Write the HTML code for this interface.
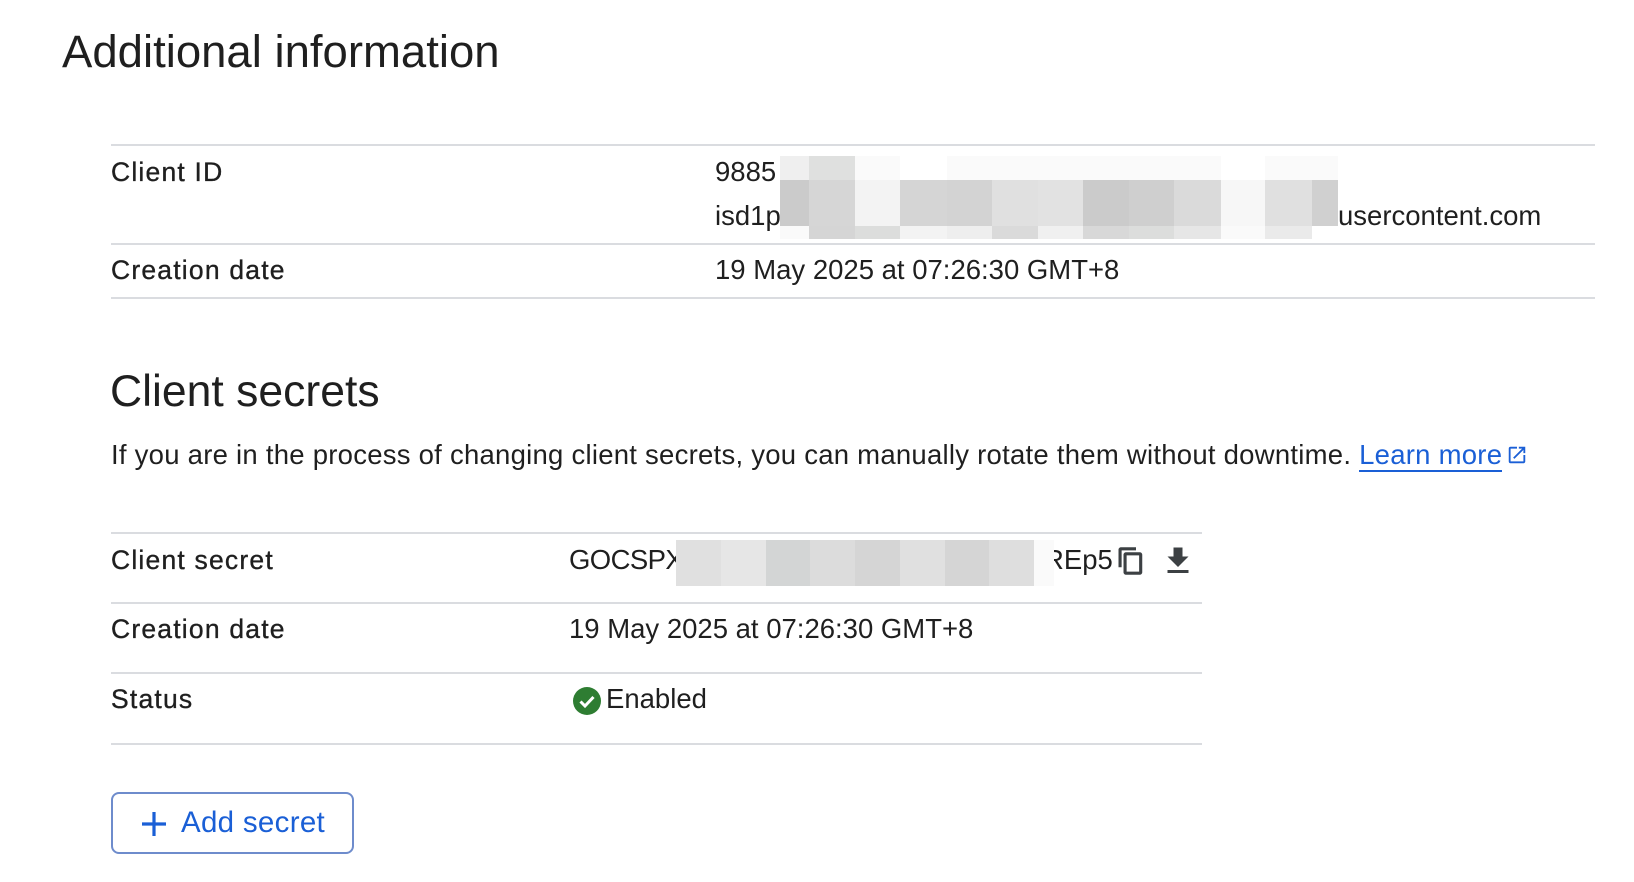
<!DOCTYPE html>
<html><head><meta charset="utf-8"><style>
*{margin:0;padding:0;box-sizing:border-box}
body{width:1634px;height:882px;background:#fff;font-family:"Liberation Sans",sans-serif;color:#1f1f1f;position:relative;overflow:hidden}
.a{position:absolute;white-space:nowrap}
.h{font-size:44px;color:#1f1f1f}
.t{font-size:27.5px;line-height:30px}
.l{font-size:26.5px;line-height:30px;color:#1f1f1f;letter-spacing:1.2px;-webkit-text-stroke:0.35px #1f1f1f}
.line{position:absolute;height:2px;background:#dadce0}
.b{position:absolute}
</style></head><body>
<div class="a h" style="left:62px;top:26px;font-size:45.5px">Additional information</div>

<div class="line" style="left:111px;top:144px;width:1484px"></div>
<div class="a l" style="left:111px;top:157px">Client ID</div>
<div class="a t" style="left:715px;top:157px">9885</div>
<div class="a t" style="left:715px;top:201px">isd1p</div>
<div class="a t" style="left:1338px;top:201px">usercontent.com</div>
<div class="line" style="left:111px;top:243px;width:1484px"></div>
<div class="a l" style="left:111px;top:255px">Creation date</div>
<div class="a t" style="left:715px;top:255px">19 May 2025 at 07:26:30 GMT+8</div>
<div class="line" style="left:111px;top:297px;width:1484px"></div>

<div class="a h" style="left:110px;top:367px;font-size:44.5px">Client secrets</div>
<div class="a t" style="left:111px;top:440px;letter-spacing:0.25px">If you are in the process of changing client secrets, you can manually rotate them without downtime. <span style="color:#1a5fd6;border-bottom:2px solid #1a5fd6">Learn more</span><svg style="vertical-align:-2px;margin-left:4px" width="22" height="22" viewBox="0 0 24 24"><path d="M19 19H5V5h7V3H5a2 2 0 0 0-2 2v14a2 2 0 0 0 2 2h14c1.1 0 2-.9 2-2v-7h-2v7zM14 3v2h3.59l-9.83 9.83 1.41 1.41L19 6.41V10h2V3h-7z" fill="#1a5fd6"/></svg></div>

<div class="line" style="left:111px;top:532px;width:1091px"></div>
<div class="a l" style="left:111px;top:545px">Client secret</div>
<div class="a t" style="left:569px;top:545px;letter-spacing:-0.6px">GOCSPX</div>
<div class="a t" style="left:1044px;top:545px">REp5</div>
<div class="b" style="left:676px;top:540px;width:378px;height:46px;display:flex">
<div style="flex:1;background:#e0e0e0"></div><div style="flex:1;background:#e6e6e6"></div><div style="flex:1;background:#d3d5d5"></div><div style="flex:1;background:#dcdcdc"></div><div style="flex:1;background:#d5d5d5"></div><div style="flex:1;background:#e0e0e0"></div><div style="flex:1;background:#d5d5d5"></div><div style="flex:1;background:#dedede"></div><div style="width:20px;background:#fafafa"></div></div>
<svg class="b" style="left:1116px;top:545px" width="30" height="32" viewBox="0 0 24 24"><path d="M16 1H4c-1.1 0-2 .9-2 2v14h2.5V3.5H16V1zm3 4H8c-1.1 0-2 .9-2 2v14c0 1.1.9 2 2 2h11c1.1 0 2-.9 2-2V7c0-1.1-.9-2-2-2zm-.5 15.5h-10v-13h10v13z" fill="#3c4043"/></svg>
<svg class="b" style="left:1160px;top:543px" width="36" height="36" viewBox="0 0 24 24"><path d="M19 9h-4V3H9v6H5l7 7 7-7zM5 18v2h14v-2H5z" fill="#3c4043"/></svg>
<div class="line" style="left:111px;top:602px;width:1091px"></div>
<div class="a l" style="left:111px;top:614px">Creation date</div>
<div class="a t" style="left:569px;top:614px">19 May 2025 at 07:26:30 GMT+8</div>
<div class="line" style="left:111px;top:672px;width:1091px"></div>
<div class="a l" style="left:111px;top:684px">Status</div>
<svg class="b" style="left:573px;top:687px" width="28" height="28" viewBox="0 0 28 28"><circle cx="14" cy="14" r="14" fill="#2e7d32"/><path d="M7.5 14.5l4.5 4.5 8.5-9" stroke="#fff" stroke-width="3" fill="none"/></svg>
<div class="a t" style="left:606px;top:684px">Enabled</div>
<div class="line" style="left:111px;top:743px;width:1091px"></div>

<div class="b" style="left:111px;top:792px;width:243px;height:62px;border:2px solid #6e8ccc;border-radius:8px"></div>
<svg class="b" style="left:142px;top:812px" width="24" height="24" viewBox="0 0 24 24"><path d="M12 0v24M0 12h24" stroke="#1a5fd6" stroke-width="3.2"/></svg>
<div class="a" style="left:181px;top:806px;font-size:29.5px;color:#1a5fd6;letter-spacing:0.3px">Add secret</div>

<div class="b" style="left:780px;top:156px;display:grid;grid-template-columns:29px 46px 45px 47px 45px 46px 45px 46px 45px 47px 44px 47px 26px;grid-template-rows:24px 46px 13px">
<div style="background:#efefef"></div><div style="background:#dfe0df"></div><div style="background:#fafafa"></div><div style="background:#fff"></div><div style="background:#fafafa"></div><div style="background:#fafafa"></div><div style="background:#fafafa"></div><div style="background:#fafafa"></div><div style="background:#fafafa"></div><div style="background:#fafafa"></div><div style="background:#fff"></div><div style="background:#fafafa"></div><div style="background:#fafafa"></div>
<div style="background:#cbcbcb"></div><div style="background:#d6d6d6"></div><div style="background:#f3f3f3"></div><div style="background:#d5d5d5"></div><div style="background:#d3d3d3"></div><div style="background:#e0e0e0"></div><div style="background:#e2e2e2"></div><div style="background:#cbcbcb"></div><div style="background:#cfcfcf"></div><div style="background:#dadada"></div><div style="background:#f7f7f7"></div><div style="background:#e0e0e0"></div><div style="background:#d0d0d0"></div>
<div style="background:#fafafa"></div><div style="background:#d5d5d5"></div><div style="background:#dcdddc"></div><div style="background:#f3f3f3"></div><div style="background:#eeeeee"></div><div style="background:#dadada"></div><div style="background:#f0f0f0"></div><div style="background:#d8d8d8"></div><div style="background:#dcdddc"></div><div style="background:#e6e6e6"></div><div style="background:#fafafa"></div><div style="background:#eaeaea"></div><div style="background:#fff"></div>
</div>
</body></html>
